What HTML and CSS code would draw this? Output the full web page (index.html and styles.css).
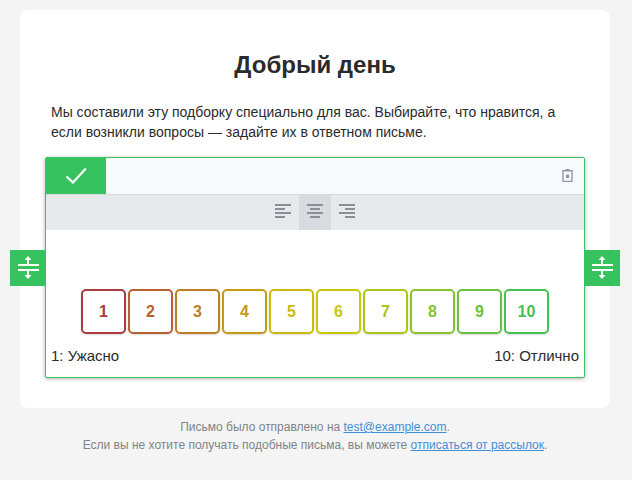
FILE: index.html
```html
<!DOCTYPE html>
<html lang="ru">
<head>
<meta charset="utf-8">
<title>Письмо</title>
<link rel="stylesheet" href="styles.css">
</head>
<body>
<main class="card">
  <h1 class="title">Добрый день</h1>
  <p class="intro">Мы составили эту подборку специально для вас. Выбирайте, что нравится, а если возникли вопросы — задайте их в ответном письме.</p>
  <section class="block">
    <div class="handle handle-left"><svg width="21" height="24" viewBox="0 0 21 24"><path d="M10 0L6.500 4H9v4h2V4h2.500zM10 23l-3.500-4H9v-4h2v4h2.500z" fill="#fff"/><path d="M0 8h21v2H0zM0 13h21v2H0z" fill="#fff"/></svg></div>
    <div class="handle handle-right"><svg width="21" height="24" viewBox="0 0 21 24"><path d="M10 0L6.500 4H9v4h2V4h2.500zM10 23l-3.500-4H9v-4h2v4h2.500z" fill="#fff"/><path d="M0 8h21v2H0zM0 13h21v2H0z" fill="#fff"/></svg></div>
    <div class="toolbar">
      <div class="confirm"><svg width="22" height="18" viewBox="0 0 22 18"><path d="M1.500 9.500l6.500 6L20.800 1.500" fill="none" stroke="#fff" stroke-width="2.200"/></svg></div>
      <div class="trash"><svg width="11" height="13" viewBox="0 0 11 13"><path d="M3.500 0h4v1h3.500v1.500H0V1h3.500z" fill="#8f98a3"/><path d="M1 2.500V12.500h9V2.500" fill="none" stroke="#8b9bb0" stroke-width="1.400"/><rect x="4" y="5.500" width="3" height="3.500" fill="#8f98a3"/></svg></div>
    </div>
    <div class="aligns">
      <div class="align"><svg width="16" height="14" viewBox="0 0 16 14"><path d="M0 0h16v2H0zM0 4h10v2H0zM0 8h16v2H0zM0 12h10v2H0z" fill="#8a9097"/></svg></div>
      <div class="align align-active"><svg width="16" height="14" viewBox="0 0 16 14"><path d="M0 0h16v2H0zM3 4h10v2H3zM0 8h16v2H0zM3 12h10v2H3z" fill="#8a9097"/></svg></div>
      <div class="align"><svg width="16" height="14" viewBox="0 0 16 14"><path d="M0 0h16v2H0zM6 4h10v2H6zM0 8h16v2H0zM6 12h10v2H6z" fill="#8a9097"/></svg></div>
    </div>
    <div class="rating">
      <div class="scale">
        <a class="score s1">1</a>
        <a class="score s2">2</a>
        <a class="score s3">3</a>
        <a class="score s4">4</a>
        <a class="score s5">5</a>
        <a class="score s6">6</a>
        <a class="score s7">7</a>
        <a class="score s8">8</a>
        <a class="score s9">9</a>
        <a class="score s10">10</a>
      </div>
      <div class="legend"><span>1: Ужасно</span><span>10: Отлично</span></div>
    </div>
  </section>
</main>
<footer class="foot">
  <div>Письмо было отправлено на <a href="#">test@example.com</a>.</div>
  <div>Если вы не хотите получать подобные письма, вы можете <a href="#">отписаться от рассылок</a>.</div>
</footer>
</body>
</html>
```

FILE: styles.css
```css
* { box-sizing: border-box; }
html, body { margin: 0; padding: 0; }
body {
  width: 632px;
  height: 480px;
  overflow: hidden;
  background: #f4f4f4;
  font-family: "Liberation Sans", Arial, sans-serif;
  color: #222;
  padding: 10px 22px 0 20px;
}
.card {
  height: 398px;
  background: #fff;
  border-radius: 8px;
  padding: 40px 25px 0;
}
.title {
  margin: 0;
  font-size: 24px;
  line-height: 30px;
  font-weight: 700;
  text-align: center;
  color: #2b2b2b;
}
.intro {
  margin: 22px 6px 0;
  font-size: 14px;
  line-height: 20px;
  color: #2b2b2b;
}
.block {
  position: relative;
  margin-top: 15px;
  width: 540px;
  height: 221px;
  border: 1px solid #38c35f;
  border-radius: 2px;
  box-shadow: 0 1px 4px rgba(0,0,0,.3);
  background: #fff;
}
.handle {
  position: absolute;
  top: 92px;
  width: 36px;
  height: 36px;
  padding-left: 1px;
  background: #36c35f;
  display: flex;
  align-items: center;
  justify-content: center;
}
.handle-left { left: -36px; }
.handle-right { right: -36px; }
.toolbar {
  height: 37px;
  display: flex;
  justify-content: space-between;
  align-items: stretch;
  background: #f8f9fb;
  border-bottom: 1px solid #d5d8dc;
}
.confirm {
  width: 60px;
  height: 36px;
  background: #36c35f;
  display: flex;
  align-items: center;
  justify-content: center;
}
.trash {
  display: flex;
  align-items: center;
  padding-right: 11px;
  padding-bottom: 1px;
}
.aligns {
  height: 35px;
  background: #e7eaed;
  display: flex;
  justify-content: center;
}
.align {
  width: 32px;
  display: flex;
  align-items: center;
  justify-content: center;
  padding-bottom: 3px;
}
.align-active { background: #d8dce0; }
.rating { padding: 59px 5px 0; }
.scale {
  display: flex;
  justify-content: center;
  gap: 2px;
}
.score {
  width: 45px;
  height: 45px;
  border: 2px solid currentColor;
  border-radius: 5px;
  display: flex;
  align-items: center;
  justify-content: center;
  font-size: 16px;
  font-weight: 700;
  box-shadow: 0 1px 2px rgba(0,0,0,.15);
}
.s1 { color: #ab3b3d; }
.s2 { color: #b9602f; }
.s3 { color: #bf7d25; }
.s4 { color: #c59a15; }
.s5 { color: #ccba0a; }
.s6 { color: #c6c808; }
.s7 { color: #a8c51a; }
.s8 { color: #86c32d; }
.s9 { color: #66c240; }
.s10 { color: #45c254; }
.legend {
  display: flex;
  justify-content: space-between;
  margin-top: 13px;
  font-size: 15px;
  line-height: 18px;
  color: #2b2b2b;
}
.foot {
  margin-top: 10px;
  text-align: center;
  font-size: 12px;
  line-height: 18px;
  color: #7f8488;
}
.foot a { color: #3f8fd8; text-decoration: underline; }
```
